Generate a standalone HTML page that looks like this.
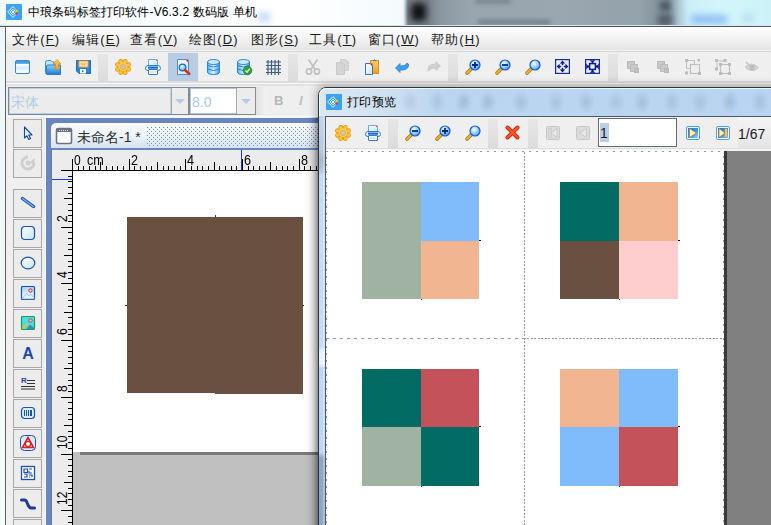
<!DOCTYPE html>
<html><head><meta charset="utf-8">
<style>
*{margin:0;padding:0;box-sizing:border-box}
html,body{width:771px;height:525px;overflow:hidden}
body{position:relative;font-family:"Liberation Sans",sans-serif;background:#eef6f8;color:#000}
.a{position:absolute}
.i{position:absolute;overflow:visible}
.t{position:absolute;white-space:nowrap}
</style></head><body>
<svg width="0" height="0" style="position:absolute"><defs>
<linearGradient id="gwin" x1="0" y1="0" x2="0" y2="1"><stop offset="0" stop-color="#3f97dd"/><stop offset=".22" stop-color="#4aa4e6"/><stop offset=".3" stop-color="#ffffff"/><stop offset=".55" stop-color="#d7ebfb"/><stop offset="1" stop-color="#ffffff"/></linearGradient>
<linearGradient id="gfold" x1="0" y1="0" x2="0" y2="1"><stop offset="0" stop-color="#8fd0f8"/><stop offset="1" stop-color="#1a7ad4"/></linearGradient>
<linearGradient id="gorg" x1="0" y1="0" x2="0" y2="1"><stop offset="0" stop-color="#ffd060"/><stop offset="1" stop-color="#f89a20"/></linearGradient>
<linearGradient id="gdb" x1="0" y1="0" x2="1" y2="0"><stop offset="0" stop-color="#5ab4ee"/><stop offset=".5" stop-color="#d8f0fe"/><stop offset="1" stop-color="#3a9ae4"/></linearGradient>
<radialGradient id="glens" cx=".4" cy=".35" r=".7"><stop offset="0" stop-color="#ffffff"/><stop offset=".5" stop-color="#9ad4fb"/><stop offset="1" stop-color="#3a9ae8"/></radialGradient>
<linearGradient id="gpaper" x1="0" y1="0" x2="1" y2="1"><stop offset="0" stop-color="#ffffff"/><stop offset="1" stop-color="#c8e2f8"/></linearGradient>
<linearGradient id="gplay" x1="0" y1="0" x2="1" y2="1"><stop offset="0" stop-color="#1478d8"/><stop offset=".6" stop-color="#3a9ae8"/><stop offset="1" stop-color="#a0e0ff"/></linearGradient>
<linearGradient id="gimg1" x1="0" y1="0" x2="0" y2="1"><stop offset="0" stop-color="#a0d4f8"/><stop offset="1" stop-color="#ffffff"/></linearGradient>
<linearGradient id="gicon" x1="0" y1="0" x2="1" y2="1"><stop offset="0" stop-color="#6cc0fa"/><stop offset="1" stop-color="#2a88ec"/></linearGradient>
</defs></svg>
<div class="a" style="left:0px;top:0px;width:771px;height:25px;background:linear-gradient(90deg,#f2f9fb 0,#fbfdfe 200px,#ffffff 300px,#f6fbfd 380px,#f4fafc 403px,#c0d0dc 405px,#7a8288 408px,#788088 428px,#8a96a0 440px,#98a4ae 470px,#9aa6b0 560px,#94a2ac 640px,#8a98a2 652px,#7e8c96 668px,#a8c4d0 678px,#cceef6 688px,#d2f6fa 720px,#ccf2f8 771px)"></div>
<div class="a" style="left:411px;top:3px;width:15px;height:18px;background:#0e1216;filter:blur(3.5px);border-radius:3px"></div>
<div class="a" style="left:660px;top:2px;width:10px;height:8px;background:#404c56;filter:blur(3px)"></div>
<div class="a" style="left:658px;top:15px;width:14px;height:10px;background:#505c66;filter:blur(3px)"></div>
<div class="a" style="left:691px;top:15px;width:36px;height:9px;background:#90bef4;filter:blur(3.5px)"></div>
<div class="a" style="left:743px;top:15px;width:10px;height:7px;background:#b0dcf4;filter:blur(3px)"></div>
<div class="a" style="left:475px;top:0px;width:36px;height:3px;background:#6a767e;filter:blur(2px)"></div>
<div class="a" style="left:478px;top:20px;width:72px;height:4px;background:#6e7a84;filter:blur(2px)"></div>
<div class="a" style="left:258px;top:12px;width:12px;height:10px;background:#c8dcf8;filter:blur(3px)"></div>
<div class="a" style="left:0px;top:25px;width:771px;height:1px;background:#d8e4ea"></div>
<div class="a" style="left:0px;top:26px;width:771px;height:1px;background:#4e565c"></div>
<svg class="i" style="left:6px;top:4px" width="16" height="16" viewBox="0 0 16 16"><rect x="0" y="0" width="16" height="16" rx="1" fill="#3aa2f8"/><g transform="rotate(45 7 8)" fill="none" stroke="#ffffff" stroke-width=".9" opacity=".9"><rect x="3.2" y="4.2" width="7.6" height="7.6"/><rect x="5" y="6" width="4" height="4"/><path d="M7 4.2 V11.8 M3.2 8 H10.8"/></g><path d="M9.5 4 L12.5 8 L9.5 12" fill="#3aa2f8"/><circle cx="10.8" cy="7" r="1.3" fill="#f4d020"/><circle cx="10.6" cy="9.6" r="1.2" fill="#e83040"/><circle cx="12.4" cy="8.4" r=".9" fill="#40b848"/></svg>
<div class="t" style="left:28px;top:3px;font-size:12px;line-height:18px;color:#000;letter-spacing:.15px">中琅条码标签打印软件-V6.3.2 数码版 单机</div>
<div class="a" style="left:0px;top:27px;width:5px;height:498px;background:linear-gradient(180deg,#eef7f9 0,#f2f8f8 50%,#f6fafa 100%)"></div>
<div class="a" style="left:5px;top:26px;width:1px;height:499px;background:#5e6266"></div>
<div class="a" style="left:6px;top:27px;width:765px;height:23px;background:linear-gradient(180deg,#fefefe 0,#f4f4f4 45%,#e4e4e4 100%)"></div>
<div class="a" style="left:6px;top:50px;width:765px;height:1px;background:#f2f2f2"></div>
<div class="a" style="left:6px;top:51px;width:765px;height:1px;background:#d6d6d6"></div>
<div class="t" style="left:12px;top:31px;font-size:13px;line-height:17px;color:#1a1a1a;letter-spacing:1.1px">文件(<u>F</u>)</div>
<div class="t" style="left:72px;top:31px;font-size:13px;line-height:17px;color:#1a1a1a;letter-spacing:1.1px">编辑(<u>E</u>)</div>
<div class="t" style="left:129.5px;top:31px;font-size:13px;line-height:17px;color:#1a1a1a;letter-spacing:1.1px">查看(<u>V</u>)</div>
<div class="t" style="left:189px;top:31px;font-size:13px;line-height:17px;color:#1a1a1a;letter-spacing:1.1px">绘图(<u>D</u>)</div>
<div class="t" style="left:250.5px;top:31px;font-size:13px;line-height:17px;color:#1a1a1a;letter-spacing:1.1px">图形(<u>S</u>)</div>
<div class="t" style="left:309px;top:31px;font-size:13px;line-height:17px;color:#1a1a1a;letter-spacing:1.1px">工具(<u>T</u>)</div>
<div class="t" style="left:367.5px;top:31px;font-size:13px;line-height:17px;color:#1a1a1a;letter-spacing:1.1px">窗口(<u>W</u>)</div>
<div class="t" style="left:431px;top:31px;font-size:13px;line-height:17px;color:#1a1a1a;letter-spacing:1.1px">帮助(<u>H</u>)</div>
<div class="a" style="left:6px;top:52px;width:765px;height:29px;background:#efefef"></div>
<div class="a" style="left:6px;top:81px;width:765px;height:2px;background:#dcdcdc"></div>
<div class="a" style="left:6px;top:83px;width:765px;height:1px;background:#fafafa"></div>
<div class="a" style="left:6px;top:84px;width:765px;height:2px;background:#e2e2e2"></div>
<div class="a" style="left:98px;top:54px;width:10px;height:27px;background:linear-gradient(180deg,#e6e6e6,#dcdcdc)"></div>
<div class="a" style="left:288px;top:54px;width:10px;height:27px;background:linear-gradient(180deg,#e6e6e6,#dcdcdc)"></div>
<div class="a" style="left:448px;top:54px;width:10px;height:27px;background:linear-gradient(180deg,#e6e6e6,#dcdcdc)"></div>
<div class="a" style="left:608px;top:54px;width:10px;height:27px;background:linear-gradient(180deg,#e6e6e6,#dcdcdc)"></div>
<div class="a" style="left:168px;top:53px;width:30px;height:28px;background:#b8cde4"></div>
<svg class="i" style="left:15px;top:60px" width="16" height="16" viewBox="0 0 16 16"><rect x="0.5" y="0.5" width="14" height="13" rx="1.5" fill="url(#gwin)" stroke="#3788cf"/></svg>
<svg class="i" style="left:45px;top:59px" width="16" height="16" viewBox="0 0 16 16"><path d="M0.5 3.5 Q0.5 1.5 2.5 1.5 H6 L7.5 3 H9 V15.5 H2.5 Q0.5 15.5 0.5 13.5Z" fill="#bfe4fb" stroke="#3a8ed8"/><path d="M1.5 7 Q2 6 3 6 H15.5 V15.5 H2.5 Q1.5 15.5 1.5 14Z" fill="url(#gfold)" stroke="#2a7cc8"/><path d="M12 0.5 L15.8 5 H13.6 V10.5 H10.4 V5 H8.2Z" fill="url(#gorg)" stroke="#d88a20" stroke-width=".8"/></svg>
<svg class="i" style="left:76px;top:60px" width="16" height="16" viewBox="0 0 16 16"><path d="M0.5 0.5 H14.5 V13.5 H3 L0.5 11Z" fill="#2a86dc" stroke="#1c6cc0"/><rect x="3" y="1" width="9" height="6" fill="#fff4c8" stroke="#e8a040"/><rect x="4.5" y="2.5" width="6" height="3" fill="#f8c070"/><rect x="4" y="9" width="6" height="4.5" fill="#fff"/><path d="M6 10 L8 11.2 L6 12.4Z" fill="#2060c0"/></svg>
<svg class="i" style="left:115px;top:59px" width="16" height="16" viewBox="0 0 16 16"><circle cx="13.54" cy="10.30" r="1.7" fill="none" stroke="#e08a10" stroke-width="1.3"/><circle cx="10.30" cy="13.54" r="1.7" fill="none" stroke="#e08a10" stroke-width="1.3"/><circle cx="5.70" cy="13.54" r="1.7" fill="none" stroke="#e08a10" stroke-width="1.3"/><circle cx="2.46" cy="10.30" r="1.7" fill="none" stroke="#e08a10" stroke-width="1.3"/><circle cx="2.46" cy="5.70" r="1.7" fill="none" stroke="#e08a10" stroke-width="1.3"/><circle cx="5.70" cy="2.46" r="1.7" fill="none" stroke="#e08a10" stroke-width="1.3"/><circle cx="10.30" cy="2.46" r="1.7" fill="none" stroke="#e08a10" stroke-width="1.3"/><circle cx="13.54" cy="5.70" r="1.7" fill="none" stroke="#e08a10" stroke-width="1.3"/><circle cx="8" cy="8" r="4.8" fill="none" stroke="#e08a10" stroke-width="1.3"/><circle cx="13.54" cy="10.30" r="1.7" fill="#ffc830"/><circle cx="10.30" cy="13.54" r="1.7" fill="#ffc830"/><circle cx="5.70" cy="13.54" r="1.7" fill="#ffc830"/><circle cx="2.46" cy="10.30" r="1.7" fill="#ffc830"/><circle cx="2.46" cy="5.70" r="1.7" fill="#ffc830"/><circle cx="5.70" cy="2.46" r="1.7" fill="#ffc830"/><circle cx="10.30" cy="2.46" r="1.7" fill="#ffc830"/><circle cx="13.54" cy="5.70" r="1.7" fill="#ffc830"/><circle cx="8" cy="8" r="4.8" fill="url(#gorg)"/><circle cx="8" cy="8" r="4.2" fill="#ffd040"/><circle cx="8" cy="8" r="2.6" fill="#c4c4cc" stroke="#e8a040" stroke-width=".7"/></svg>
<svg class="i" style="left:145px;top:59px" width="16" height="16" viewBox="0 0 16 16"><path d="M3.5 0.5 H10.5 L12.5 2.5 V7 H3.5Z" fill="url(#gpaper)" stroke="#6aaae0"/><path d="M10.5 0.5 L12.5 2.5 V0.5Z" fill="#e02020"/><path d="M3 6.5 H13 Q15.5 6.5 15.5 9.5 Q15.5 11.5 13 11.5 H3 Q0.5 11.5 0.5 9.5 Q0.5 6.5 3 6.5Z" fill="#f4faff" stroke="#2a7ed0"/><rect x="3" y="7.5" width="10" height="2.2" fill="#1a6cc8"/><rect x="3.5" y="10.5" width="9" height="5" rx=".5" fill="#ffffff" stroke="#2a7ed0"/><rect x="4.5" y="12.5" width="7" height="1" fill="#b8daf4"/></svg>
<svg class="i" style="left:176px;top:59px" width="16" height="16" viewBox="0 0 16 16"><path d="M1.5 0.5 H10 L12.5 3 V15.5 H1.5Z" fill="url(#gpaper)" stroke="#4a90d8"/><path d="M9.5 0.5 L12.5 3.5 V0.5Z" fill="#e02020"/><circle cx="6.5" cy="8.5" r="3.4" fill="url(#glens)" stroke="#1a6ac8" stroke-width="1.2"/><path d="M9.2 11.2 L13.2 14.8" stroke="#d83010" stroke-width="2.6" stroke-linecap="round"/></svg>
<svg class="i" style="left:206px;top:59px" width="16" height="16" viewBox="0 0 16 16"><path d="M1.5 3 V13 Q1.5 15.5 7.5 15.5 Q13.5 15.5 13.5 13 V3" fill="url(#gdb)" stroke="#2a86d8"/><ellipse cx="7.5" cy="3" rx="6" ry="2.5" fill="#c8ecfe" stroke="#2a86d8"/><path d="M1.5 6.5 Q7.5 9.5 13.5 6.5 M1.5 10 Q7.5 13 13.5 10" fill="none" stroke="#2a86d8"/></svg>
<svg class="i" style="left:236px;top:59px" width="16" height="16" viewBox="0 0 16 16"><path d="M1.5 3 V13 Q1.5 15.5 7.5 15.5 Q13.5 15.5 13.5 13 V3" fill="url(#gdb)" stroke="#2a86d8"/><ellipse cx="7.5" cy="3" rx="6" ry="2.5" fill="#c8ecfe" stroke="#2a86d8"/><path d="M1.5 6.5 Q7.5 9.5 13.5 6.5 M1.5 10 Q7.5 13 13.5 10" fill="none" stroke="#2a86d8"/><circle cx="11.5" cy="11.5" r="4.3" fill="#2aa040" stroke="#1a8030" stroke-width=".8"/><path d="M9.3 11.6 L11 13.2 L13.8 9.8" fill="none" stroke="#d8ffd8" stroke-width="1.4"/></svg>
<svg class="i" style="left:266px;top:60px" width="16" height="16" viewBox="0 0 16 16"><path d="M2 0 V15 M5.5 0 V15 M9 0 V15 M12.5 0 V15 M0 2 H15 M0 5.5 H15 M0 9 H15 M0 12.5 H15" stroke="#3c5c80" stroke-width="1.15"/></svg>
<svg class="i" style="left:305px;top:59px" width="16" height="16" viewBox="0 0 16 16"><path d="M3.5 0.5 L10.5 11 M12.5 0.5 L5.5 11" stroke="#c0c0c0" stroke-width="1.6"/><circle cx="4" cy="12.5" r="2.6" fill="none" stroke="#c0c0c0" stroke-width="1.6"/><circle cx="12" cy="12.5" r="2.6" fill="none" stroke="#c0c0c0" stroke-width="1.6"/></svg>
<svg class="i" style="left:335px;top:59px" width="16" height="16" viewBox="0 0 16 16"><path d="M5.5 0.5 H11 L13.5 3 V11.5 H5.5Z" fill="#d8d8d8" stroke="#cfcfcf"/><path d="M1.5 3.5 H7 L9.5 6 V15.5 H1.5Z" fill="#d4d4d4" stroke="#c8c8c8"/></svg>
<svg class="i" style="left:365px;top:59px" width="16" height="16" viewBox="0 0 16 16"><rect x="5.5" y="1.5" width="8" height="13" fill="url(#gorg)" stroke="#d89020"/><path d="M8 2 Q9.5 -0.5 11 2" fill="#5aa0e0" stroke="#2a78c8"/><path d="M0.5 4.5 H5 L7.5 7 V15.5 H0.5Z" fill="url(#gpaper)" stroke="#2a78c8"/><path d="M5 4.5 L7.5 7 V4.5Z" fill="#e02020"/></svg>
<svg class="i" style="left:395px;top:60px" width="16" height="16" viewBox="0 0 16 16"><path d="M0.5 8 L5 3.5 V6 Q11 6 12 3 Q14 3.5 13.5 6 Q12.5 10.5 5 10 V12.5Z" fill="#3aa0f0" stroke="#2a80d0" stroke-width=".8"/></svg>
<svg class="i" style="left:425px;top:60px" width="16" height="16" viewBox="0 0 16 16"><path d="M15.5 6 L11 1.5 V4 Q5 4 3.5 7 Q2 9.5 3.5 11 Q5.5 8 11 8 V10.5Z" fill="#d0d0d0" stroke="#c8c8c8" stroke-width=".8"/></svg>
<svg class="i" style="left:465px;top:59px" width="16" height="16" viewBox="0 0 16 16"><path d="M2 14 L6 10" stroke="#a07010" stroke-width="3.6" stroke-linecap="round"/><path d="M2 14 L6 10" stroke="#e8b030" stroke-width="2.4" stroke-linecap="round"/><circle cx="10" cy="6" r="5" fill="url(#glens)" stroke="#1a5ad0" stroke-width="1.2"/><path d="M10 3 V9 M7 6 H13" stroke="#002a90" stroke-width="1.8"/></svg>
<svg class="i" style="left:495px;top:59px" width="16" height="16" viewBox="0 0 16 16"><path d="M2 14 L6 10" stroke="#a07010" stroke-width="3.6" stroke-linecap="round"/><path d="M2 14 L6 10" stroke="#e8b030" stroke-width="2.4" stroke-linecap="round"/><circle cx="10" cy="6" r="5" fill="url(#glens)" stroke="#1a5ad0" stroke-width="1.2"/><path d="M7 6 H13" stroke="#002a90" stroke-width="1.8"/></svg>
<svg class="i" style="left:525px;top:59px" width="16" height="16" viewBox="0 0 16 16"><path d="M2 14 L6 10" stroke="#a07010" stroke-width="3.6" stroke-linecap="round"/><path d="M2 14 L6 10" stroke="#e8b030" stroke-width="2.4" stroke-linecap="round"/><circle cx="10" cy="6" r="5" fill="url(#glens)" stroke="#1a5ad0" stroke-width="1.2"/></svg>
<svg class="i" style="left:555px;top:59px" width="16" height="16" viewBox="0 0 16 16"><rect x="0.6" y="0.6" width="13.8" height="13.8" fill="#eeeef8" stroke="#1030a0" stroke-width="1.2"/><path d="M7.5 1 V14 M1 7.5 H14" stroke="#c8cce8" stroke-width="1"/><path d="M7.5 1.6 L4.8 4.6 H10.2Z M7.5 13.4 L4.8 10.4 H10.2Z M1.6 7.5 L4.6 4.8 V10.2Z M13.4 7.5 L10.4 4.8 V10.2Z" fill="#0a1a90"/><path d="M7.5 4 V6 M7.5 9 V11 M4 7.5 H6 M9 7.5 H11" stroke="#0a1a90" stroke-width="1.6"/></svg>
<svg class="i" style="left:585px;top:59px" width="16" height="16" viewBox="0 0 16 16"><rect x="0.6" y="0.6" width="13.8" height="13.8" fill="#eeeef8" stroke="#1030a0" stroke-width="1.2"/><rect x="4.6" y="4.6" width="5.8" height="5.8" fill="#eef0fa" stroke="#0a1a90" stroke-width="1.5"/><path d="M4.6 1.2 H10.4 L7.5 3.8Z M4.6 13.8 H10.4 L7.5 11.2Z M1.2 4.6 V10.4 L3.8 7.5Z M13.8 4.6 V10.4 L11.2 7.5Z" fill="#0a1a90"/><path d="M7.5 3 V4.5 M7.5 10.5 V12 M3 7.5 H4.5 M10.5 7.5 H12" stroke="#0a1a90" stroke-width="1.8"/></svg>
<svg class="i" style="left:627px;top:61px" width="16" height="16" viewBox="0 0 16 16"><rect x="0.5" y="0.5" width="7" height="7" fill="#c8c8c8" stroke="#bcbcbc"/><rect x="3.5" y="3.5" width="7" height="7" fill="#c8c8c8" stroke="#bcbcbc"/><rect x="7.5" y="7.5" width="4" height="4" fill="#c0c0c0" stroke="#b8b8b8"/></svg>
<svg class="i" style="left:657px;top:61px" width="16" height="16" viewBox="0 0 16 16"><rect x="0.5" y="0.5" width="7" height="7" fill="#c8c8c8" stroke="#bcbcbc"/><rect x="3.5" y="3.5" width="7" height="7" fill="#c8c8c8" stroke="#bcbcbc"/><rect x="7.5" y="7.5" width="4" height="4" fill="#c0c0c0" stroke="#b8b8b8"/></svg>
<svg class="i" style="left:685px;top:59px" width="16" height="16" viewBox="0 0 16 16"><path d="M1.5 1.5 H9.5 V5 M1.5 1.5 V9.5 H5" fill="none" stroke="#c0c0c0" stroke-width="1"/><rect x="5.5" y="5.5" width="9" height="9" fill="none" stroke="#c0c0c0" stroke-width="1.2"/><rect x="0" y="0" width="3" height="3" fill="#bcbcbc"/><rect x="12.5" y="0" width="2.5" height="2.5" fill="#bcbcbc"/><rect x="0" y="12.5" width="3" height="3" fill="#bcbcbc"/><rect x="13" y="13" width="3" height="3" fill="#bcbcbc"/></svg>
<svg class="i" style="left:715px;top:59px" width="16" height="16" viewBox="0 0 16 16"><path d="M2 2 H9.5 M2 2 V9.5" fill="none" stroke="#c0c0c0"/><rect x="5.5" y="5.5" width="9" height="9" fill="none" stroke="#c0c0c0" stroke-width="1.2"/><rect x="0" y="0" width="3" height="3" fill="#bcbcbc"/><rect x="8.5" y="0" width="3" height="3" fill="#bcbcbc"/><rect x="0" y="8.5" width="3" height="3" fill="#bcbcbc"/><rect x="4" y="4" width="3" height="3" fill="#bcbcbc"/><rect x="13" y="4" width="3" height="3" fill="#bcbcbc"/><rect x="4" y="13" width="3" height="3" fill="#bcbcbc"/><rect x="13" y="13" width="3" height="3" fill="#bcbcbc"/></svg>
<svg class="i" style="left:744px;top:60px" width="16" height="16" viewBox="0 0 16 16"><path d="M1 7 Q7 1 14.5 7.5 Q8 14 1 7Z" fill="#d4d4d4" stroke="#c8c8c8"/><circle cx="8" cy="7.5" r="2.6" fill="#bdbdbd"/><path d="M2 2 L6 6" stroke="#c4c4c4" stroke-width="1.6"/></svg>
<div class="a" style="left:6px;top:86px;width:765px;height:31px;background:#efefef"></div>
<div class="a" style="left:8px;top:87px;width:181px;height:28px;background:#ececec;border:1px solid #7a8a9a"></div>
<div class="a" style="left:9px;top:88px;width:162px;height:26px;border:1px solid #b8d0e8"></div>
<div class="a" style="left:171px;top:88px;width:1px;height:26px;background:#a8a8a8"></div>
<div class="t" style="left:11px;top:93px;font-size:14px;line-height:18px;color:#b4cce4;letter-spacing:-.5px">宋体</div>
<svg class="i" style="left:175px;top:99px" width="10" height="6"><path d="M0 0 H10 L5 5Z" fill="#b0cce8"/></svg>
<div class="a" style="left:189px;top:87px;width:67px;height:28px;background:#ececec;border:1px solid #8a8a8a"></div>
<div class="a" style="left:190px;top:88px;width:47px;height:26px;background:#fff;border:1px solid #b0c8e4"></div>
<div class="a" style="left:236px;top:88px;width:1px;height:26px;background:#a8a8a8"></div>
<div class="t" style="left:192px;top:94px;font-size:14px;line-height:16px;color:#a8c8ec">8.0</div>
<svg class="i" style="left:241px;top:99px" width="10" height="6"><path d="M0 0 H10 L5 5Z" fill="#b0cce8"/></svg>
<div class="a" style="left:256px;top:87px;width:10px;height:28px;background:linear-gradient(90deg,#e0e0e0,#f2f2f2)"></div>
<div class="t" style="left:274px;top:93px;font-size:13px;font-weight:bold;line-height:16px;color:#b8b8b8">B</div>
<div class="t" style="left:299px;top:93px;font-size:13px;font-weight:bold;font-style:italic;line-height:16px;color:#c0c0c0">I</div>
<div class="a" style="left:6px;top:116px;width:765px;height:1px;background:#fafafa"></div>
<div class="a" style="left:6px;top:117px;width:40px;height:408px;background:#efefef"></div>
<div class="a" style="left:45px;top:117px;width:1px;height:408px;background:#fbfbfb"></div>
<div class="a" style="left:13px;top:119px;width:29px;height:29px;background:#ececec;border:1px solid #a8a8a8"></div>
<svg class="i" style="left:20px;top:125px" width="16" height="16" viewBox="0 0 16 16"><path d="M4.5 2 L4.5 13 L6.8 10.8 L8.8 14.5 L10.6 13.6 L8.7 10 L12 10Z" fill="#e0f8ff" stroke="#1a40b0" stroke-width="1.1" stroke-linejoin="round"/></svg>
<div class="a" style="left:13px;top:149px;width:29px;height:29px;background:#ececec;border:1px solid #a8a8a8"></div>
<svg class="i" style="left:20px;top:155px" width="16" height="16" viewBox="0 0 16 16"><path d="M8 2 A6 6 0 1 0 14 8" fill="none" stroke="#cfcfcf" stroke-width="3"/><circle cx="8" cy="8" r="2.5" fill="#d0d0d0"/><path d="M14.5 3 L14.5 9 L9 8Z" fill="#cccccc"/></svg>
<div class="a" style="left:13px;top:189px;width:29px;height:29px;background:#ececec;border:1px solid #a8a8a8"></div>
<svg class="i" style="left:20px;top:195px" width="16" height="16" viewBox="0 0 16 16"><path d="M2.5 3.5 L13.5 11.5" stroke="#1a50b0" stroke-width="3.4" stroke-linecap="round"/><path d="M2.5 3.5 L13.5 11.5" stroke="#7ab4ec" stroke-width="1.4" stroke-linecap="round"/></svg>
<div class="a" style="left:13px;top:219px;width:29px;height:29px;background:#ececec;border:1px solid #a8a8a8"></div>
<svg class="i" style="left:20px;top:225px" width="16" height="16" viewBox="0 0 16 16"><rect x="1.5" y="1.5" width="13" height="13" rx="3.5" fill="url(#gpaper)" stroke="#1a50b0" stroke-width="1.2"/></svg>
<div class="a" style="left:13px;top:249px;width:29px;height:29px;background:#ececec;border:1px solid #a8a8a8"></div>
<svg class="i" style="left:20px;top:255px" width="16" height="16" viewBox="0 0 16 16"><ellipse cx="8" cy="8" rx="6.8" ry="5.8" fill="url(#gpaper)" stroke="#1a50b0" stroke-width="1.2"/></svg>
<div class="a" style="left:13px;top:279px;width:29px;height:29px;background:#ececec;border:1px solid #a8a8a8"></div>
<svg class="i" style="left:20px;top:285px" width="16" height="16" viewBox="0 0 16 16"><rect x="1.5" y="1.5" width="13" height="13" rx="1" fill="url(#gimg1)" stroke="#1a50b0" stroke-width="1.2"/><path d="M2.2 13.8 L6.5 8.5 L9 11 L11 9.5 L13.8 12.5 V13.8Z" fill="#e4f2fc" stroke="#90b8e0" stroke-width=".8"/><circle cx="10.5" cy="5.5" r="1.7" fill="#ffc8c8" stroke="#e03030" stroke-width="1"/></svg>
<div class="a" style="left:13px;top:309px;width:29px;height:29px;background:#ececec;border:1px solid #a8a8a8"></div>
<svg class="i" style="left:20px;top:315px" width="16" height="16" viewBox="0 0 16 16"><rect x="1.5" y="1.5" width="13" height="13" rx="1" fill="#48dcf0" stroke="#20a040" stroke-width="1.2"/><path d="M6.5 14 L10 9.5 L14 13 V14Z" fill="#3a88c8"/><path d="M2.2 12.5 L6.5 8 L8 9.5 L3.8 14Z" fill="#f0c020"/><circle cx="10.5" cy="5.5" r="1.7" fill="#ffc8c8" stroke="#e03030" stroke-width="1"/></svg>
<div class="a" style="left:13px;top:339px;width:29px;height:29px;background:#ececec;border:1px solid #a8a8a8"></div>
<svg class="i" style="left:20px;top:345px" width="16" height="16" viewBox="0 0 16 16"><text x="8" y="14" text-anchor="middle" font-family="Liberation Sans" font-weight="bold" font-size="16" fill="#1a4aa8">A</text></svg>
<div class="a" style="left:13px;top:369px;width:29px;height:29px;background:#ececec;border:1px solid #a8a8a8"></div>
<svg class="i" style="left:20px;top:375px" width="16" height="16" viewBox="0 0 16 16"><text x="1" y="8" font-family="Liberation Sans" font-weight="bold" font-size="8" fill="#1a4aa8">R</text><path d="M7 5.5 H15 M7 8.5 H15 M1 11.5 H15 M1 14 H15" stroke="#303030" stroke-width="1"/></svg>
<div class="a" style="left:13px;top:399px;width:29px;height:29px;background:#ececec;border:1px solid #a8a8a8"></div>
<svg class="i" style="left:20px;top:405px" width="16" height="16" viewBox="0 0 16 16"><rect x="1.5" y="2.5" width="13" height="11" rx="3" fill="#d8ecfc" stroke="#1a50b0" stroke-width="1.2"/><rect x="4" y="5" width="1" height="6" fill="#1a50b0"/><rect x="6" y="5" width="1" height="6" fill="#1a50b0"/><rect x="8" y="5" width="1" height="6" fill="#1a50b0"/><rect x="10" y="5" width="1" height="6" fill="#1a50b0"/><rect x="11" y="5" width="1" height="6" fill="#1a50b0"/></svg>
<div class="a" style="left:13px;top:429px;width:29px;height:29px;background:#ececec;border:1px solid #a8a8a8"></div>
<svg class="i" style="left:20px;top:435px" width="16" height="16" viewBox="0 0 16 16"><rect x="0.5" y="0.5" width="15" height="15" rx="4" fill="#d8ecfc" stroke="#1a50b0"/><path d="M8 2.5 L13.5 12.5 H2.5Z" fill="none" stroke="#e02020" stroke-width="1.6"/><circle cx="8" cy="9" r="2.6" fill="#fff" stroke="#e02020" stroke-width="1.3"/></svg>
<div class="a" style="left:13px;top:459px;width:29px;height:29px;background:#ececec;border:1px solid #a8a8a8"></div>
<svg class="i" style="left:20px;top:465px" width="16" height="16" viewBox="0 0 16 16"><rect x="1.5" y="1.5" width="13" height="13" fill="#fff" stroke="#1a50b0" stroke-width="1.3"/><path d="M4 4 H7.5 V7.5 H4Z M4 9 H7 V12 H4" fill="none" stroke="#1a50b0" stroke-width="1.2"/><path d="M9 4 H12 M9 6 V8 H12 M9 10 H12 V12 M10 12 H9" fill="none" stroke="#1a50b0" stroke-width="1.2"/></svg>
<div class="a" style="left:13px;top:489px;width:29px;height:29px;background:#ececec;border:1px solid #a8a8a8"></div>
<svg class="i" style="left:20px;top:495px" width="16" height="16" viewBox="0 0 16 16"><path d="M1.5 5 H4.5 Q6 5 7 7.5 L8.5 11 Q9.5 13 11.5 13 H14.5" fill="none" stroke="#1a3aa0" stroke-width="3" stroke-linecap="round"/></svg>
<div class="a" style="left:13px;top:519px;width:29px;height:29px;background:#ececec;border:1px solid #a8a8a8"></div>
<div class="a" style="left:46px;top:118px;width:272px;height:407px;background:#6a86c0"></div>
<div class="a" style="left:51px;top:123px;width:267px;height:25px;background:linear-gradient(180deg,#fafcfe 0,#eef4fa 50%,#d6e2f0 100%);border-radius:5px 0 0 0"></div>
<svg class="i" style="left:56px;top:128px" width="16" height="16"><rect x="0.5" y="0.5" width="15" height="15" rx="1.5" fill="#fff" stroke="#6a7480" stroke-width="1.6"/><rect x="1" y="1" width="14" height="3" fill="#6a7480"/><path d="M3 2.5 H4 M5 2.5 H6 M7 2.5 H8 M9 2.5 H10 M11 2.5 H12" stroke="#fff" stroke-width=".8"/></svg>
<div class="t" style="left:77px;top:128px;font-size:14px;line-height:18px;color:#2e2e2e">未命名-1 *</div>
<svg class="i" style="left:147px;top:127px" width="171" height="19"><defs><pattern id="dots" width="4" height="4" patternUnits="userSpaceOnUse"><rect x="0" y="0" width="1" height="1" fill="#6e8cc8"/><rect x="2" y="2" width="1" height="1" fill="#6e8cc8"/></pattern></defs><rect width="171" height="19" fill="url(#dots)"/></svg>
<div class="a" style="left:51px;top:148px;width:267px;height:2px;background:#6a86c0"></div>
<div class="a" style="left:52px;top:150px;width:266px;height:375px;background:#ececec"></div>
<div class="a" style="left:51px;top:150px;width:1px;height:375px;background:#6a7a92"></div>
<div class="a" style="left:73px;top:171px;width:245px;height:281px;background:#fff"></div>
<div class="a" style="left:73px;top:452px;width:245px;height:73px;background:#c0c0c0"></div>
<div class="a" style="left:80px;top:452px;width:238px;height:3px;background:#7a7a7a"></div>
<div class="a" style="left:127px;top:217px;width:176px;height:177px;background:#6a5040"></div>
<div class="a" style="left:127px;top:393px;width:88px;height:1px;background:#fff"></div>
<div class="a" style="left:215px;top:215px;width:1px;height:2px;background:#333"></div>
<div class="a" style="left:125px;top:305px;width:2px;height:1px;background:#333"></div>
<div class="a" style="left:303px;top:305px;width:1px;height:1px;background:#333"></div>
<svg class="i" style="left:0;top:0" width="771" height="525"><path d="M61 170.5 H318" stroke="#000" stroke-width="1"/><path d="M72.5 159 V525" stroke="#000" stroke-width="1"/><path d="M72.5 159 V170" stroke="#000"/><path d="M78.5 166 V170" stroke="#000"/><path d="M83.5 166 V170" stroke="#000"/><path d="M89.5 166 V170" stroke="#000"/><path d="M95.5 166 V170" stroke="#000"/><path d="M100.5 162 V170" stroke="#000"/><path d="M106.5 166 V170" stroke="#000"/><path d="M112.5 166 V170" stroke="#000"/><path d="M117.5 166 V170" stroke="#000"/><path d="M123.5 166 V170" stroke="#000"/><path d="M129.5 159 V170" stroke="#000"/><path d="M134.5 166 V170" stroke="#000"/><path d="M140.5 166 V170" stroke="#000"/><path d="M146.5 166 V170" stroke="#000"/><path d="M151.5 166 V170" stroke="#000"/><path d="M157.5 162 V170" stroke="#000"/><path d="M163.5 166 V170" stroke="#000"/><path d="M168.5 166 V170" stroke="#000"/><path d="M174.5 166 V170" stroke="#000"/><path d="M180.5 166 V170" stroke="#000"/><path d="M185.5 159 V170" stroke="#000"/><path d="M191.5 166 V170" stroke="#000"/><path d="M197.5 166 V170" stroke="#000"/><path d="M202.5 166 V170" stroke="#000"/><path d="M208.5 166 V170" stroke="#000"/><path d="M214.5 162 V170" stroke="#000"/><path d="M219.5 166 V170" stroke="#000"/><path d="M225.5 166 V170" stroke="#000"/><path d="M231.5 166 V170" stroke="#000"/><path d="M236.5 166 V170" stroke="#000"/><path d="M242.5 159 V170" stroke="#000"/><path d="M248.5 166 V170" stroke="#000"/><path d="M253.5 166 V170" stroke="#000"/><path d="M259.5 166 V170" stroke="#000"/><path d="M265.5 166 V170" stroke="#000"/><path d="M270.5 162 V170" stroke="#000"/><path d="M276.5 166 V170" stroke="#000"/><path d="M282.5 166 V170" stroke="#000"/><path d="M287.5 166 V170" stroke="#000"/><path d="M293.5 166 V170" stroke="#000"/><path d="M299.5 159 V170" stroke="#000"/><path d="M304.5 166 V170" stroke="#000"/><path d="M310.5 166 V170" stroke="#000"/><path d="M316.5 166 V170" stroke="#000"/><path d="M61 170.5 H72" stroke="#000"/><path d="M68 176.5 H72" stroke="#000"/><path d="M68 181.5 H72" stroke="#000"/><path d="M68 187.5 H72" stroke="#000"/><path d="M68 193.5 H72" stroke="#000"/><path d="M64 198.5 H72" stroke="#000"/><path d="M68 204.5 H72" stroke="#000"/><path d="M68 210.5 H72" stroke="#000"/><path d="M68 215.5 H72" stroke="#000"/><path d="M68 221.5 H72" stroke="#000"/><path d="M61 227.5 H72" stroke="#000"/><path d="M68 232.5 H72" stroke="#000"/><path d="M68 238.5 H72" stroke="#000"/><path d="M68 244.5 H72" stroke="#000"/><path d="M68 249.5 H72" stroke="#000"/><path d="M64 255.5 H72" stroke="#000"/><path d="M68 261.5 H72" stroke="#000"/><path d="M68 266.5 H72" stroke="#000"/><path d="M68 272.5 H72" stroke="#000"/><path d="M68 278.5 H72" stroke="#000"/><path d="M61 283.5 H72" stroke="#000"/><path d="M68 289.5 H72" stroke="#000"/><path d="M68 295.5 H72" stroke="#000"/><path d="M68 300.5 H72" stroke="#000"/><path d="M68 306.5 H72" stroke="#000"/><path d="M64 312.5 H72" stroke="#000"/><path d="M68 317.5 H72" stroke="#000"/><path d="M68 323.5 H72" stroke="#000"/><path d="M68 329.5 H72" stroke="#000"/><path d="M68 334.5 H72" stroke="#000"/><path d="M61 340.5 H72" stroke="#000"/><path d="M68 346.5 H72" stroke="#000"/><path d="M68 351.5 H72" stroke="#000"/><path d="M68 357.5 H72" stroke="#000"/><path d="M68 363.5 H72" stroke="#000"/><path d="M64 368.5 H72" stroke="#000"/><path d="M68 374.5 H72" stroke="#000"/><path d="M68 380.5 H72" stroke="#000"/><path d="M68 385.5 H72" stroke="#000"/><path d="M68 391.5 H72" stroke="#000"/><path d="M61 397.5 H72" stroke="#000"/><path d="M68 402.5 H72" stroke="#000"/><path d="M68 408.5 H72" stroke="#000"/><path d="M68 414.5 H72" stroke="#000"/><path d="M68 419.5 H72" stroke="#000"/><path d="M64 425.5 H72" stroke="#000"/><path d="M68 431.5 H72" stroke="#000"/><path d="M68 436.5 H72" stroke="#000"/><path d="M68 442.5 H72" stroke="#000"/><path d="M68 448.5 H72" stroke="#000"/><path d="M61 454.5 H72" stroke="#000"/><path d="M68 459.5 H72" stroke="#000"/><path d="M68 465.5 H72" stroke="#000"/><path d="M68 471.5 H72" stroke="#000"/><path d="M68 476.5 H72" stroke="#000"/><path d="M64 482.5 H72" stroke="#000"/><path d="M68 488.5 H72" stroke="#000"/><path d="M68 493.5 H72" stroke="#000"/><path d="M68 499.5 H72" stroke="#000"/><path d="M68 505.5 H72" stroke="#000"/><path d="M61 510.5 H72" stroke="#000"/><path d="M68 516.5 H72" stroke="#000"/><path d="M68 522.5 H72" stroke="#000"/></svg>
<div class="t" style="left:74px;top:153px;font-size:14px;line-height:14px;color:#000;transform-origin:0 0;transform:scaleX(.86)">0</div>
<div class="t" style="left:86.5px;top:153px;font-size:14px;line-height:14px;color:#000;transform-origin:0 100%;transform:scale(.9,1.1)">cm</div>
<div class="t" style="left:131px;top:153px;font-size:14px;line-height:14px;color:#000;transform-origin:0 0;transform:scaleX(.9)">2</div>
<div class="t" style="left:187px;top:153px;font-size:14px;line-height:14px;color:#000;transform-origin:0 0;transform:scaleX(.9)">4</div>
<div class="t" style="left:244px;top:153px;font-size:14px;line-height:14px;color:#000;transform-origin:0 0;transform:scaleX(.9)">6</div>
<div class="t" style="left:301px;top:153px;font-size:14px;line-height:14px;color:#000;transform-origin:0 0;transform:scaleX(.9)">8</div>
<div class="t" style="left:54.5px;top:222px;font-size:14px;line-height:14px;color:#000;transform-origin:0 0;transform:rotate(-90deg) scaleX(.86)">2</div>
<div class="t" style="left:54.5px;top:278px;font-size:14px;line-height:14px;color:#000;transform-origin:0 0;transform:rotate(-90deg) scaleX(.86)">4</div>
<div class="t" style="left:54.5px;top:335px;font-size:14px;line-height:14px;color:#000;transform-origin:0 0;transform:rotate(-90deg) scaleX(.86)">6</div>
<div class="t" style="left:54.5px;top:392px;font-size:14px;line-height:14px;color:#000;transform-origin:0 0;transform:rotate(-90deg) scaleX(.86)">8</div>
<div class="t" style="left:54.5px;top:449px;font-size:14px;line-height:14px;color:#000;transform-origin:0 0;transform:rotate(-90deg) scaleX(.86)">10</div>
<div class="t" style="left:54.5px;top:505px;font-size:14px;line-height:14px;color:#000;transform-origin:0 0;transform:rotate(-90deg) scaleX(.86)">12</div>
<div class="a" style="left:52px;top:179px;width:20px;height:1px;background:#1a3adc"></div>
<div class="a" style="left:241px;top:150px;width:1px;height:20px;background:#1a3adc"></div>
<div class="a" style="left:304px;top:117px;width:14px;height:408px;background:linear-gradient(90deg,rgba(0,0,0,0),rgba(0,0,0,.02) 25%,rgba(0,0,0,.06) 50%,rgba(0,0,0,.14) 75%,rgba(0,0,0,.3))"></div>
<div class="a" style="left:318px;top:87px;width:460px;height:450px;border:1px solid #2e3438;border-radius:8px 0 0 0;box-shadow:-1px -1px 9px 1px rgba(0,0,0,.28);background:linear-gradient(180deg,#dfe9f2 0,#c8dcee 29px,#b6cce2 200px,#98b2cc 100%)"></div>
<div class="a" style="left:319px;top:88px;width:452px;height:28px;border-top-left-radius:7px;box-shadow:inset 1px 1px 0 rgba(255,255,255,.75);background:radial-gradient(ellipse 9px 12px at 91px 14px,rgba(100,130,160,0.18),rgba(100,130,160,0)),radial-gradient(ellipse 9px 12px at 118px 14px,rgba(100,130,160,0.22),rgba(100,130,160,0)),radial-gradient(ellipse 9px 12px at 145px 14px,rgba(100,130,160,0.3),rgba(100,130,160,0)),radial-gradient(ellipse 9px 12px at 169px 14px,rgba(100,130,160,0.3),rgba(100,130,160,0)),radial-gradient(ellipse 9px 12px at 202px 14px,rgba(100,130,160,0.26),rgba(100,130,160,0)),radial-gradient(ellipse 9px 12px at 237px 14px,rgba(100,130,160,0.22),rgba(100,130,160,0)),radial-gradient(ellipse 9px 12px at 267px 14px,rgba(100,130,160,0.24),rgba(100,130,160,0)),radial-gradient(ellipse 9px 12px at 297px 14px,rgba(100,130,160,0.2),rgba(100,130,160,0)),radial-gradient(ellipse 9px 12px at 323px 14px,rgba(100,130,160,0.26),rgba(100,130,160,0)),radial-gradient(ellipse 9px 12px at 353px 14px,rgba(100,130,160,0.22),rgba(100,130,160,0)),radial-gradient(ellipse 9px 12px at 381px 14px,rgba(100,130,160,0.22),rgba(100,130,160,0)),radial-gradient(ellipse 9px 12px at 411px 14px,rgba(100,130,160,0.28),rgba(100,130,160,0)),radial-gradient(ellipse 9px 12px at 441px 14px,rgba(100,130,160,0.24),rgba(100,130,160,0)),linear-gradient(90deg,#dce8f2 0,#d0e2f2 60px,#bcd6f0 120px,#b8d4f0 100%)"></div>
<div class="a" style="left:319px;top:116px;width:6px;height:409px;background:linear-gradient(90deg,rgba(255,255,255,0) 0,rgba(255,255,255,0) 60%,rgba(255,255,255,.45) 85%,rgba(255,255,255,.1) 100%),linear-gradient(180deg,#c0d4e8 0,#b8cadc 34px,#a8b8c8 44px,#b0c8e0 54px,#c4dcf4 60px,#c4dcf4 230px,#e8f2fc 236px,#e8f2fc 248px,#bcd8f6 252px,#bcd8f6 336px,#8ea8c4 342px,#8ea8c4 100%)"></div>
<svg class="i" style="left:326px;top:94px" width="16" height="16" viewBox="0 0 16 16"><rect x="0" y="0" width="16" height="16" rx="1" fill="#3aa2f8"/><g transform="rotate(45 7 8)" fill="none" stroke="#ffffff" stroke-width=".9" opacity=".9"><rect x="3.2" y="4.2" width="7.6" height="7.6"/><rect x="5" y="6" width="4" height="4"/><path d="M7 4.2 V11.8 M3.2 8 H10.8"/></g><path d="M9.5 4 L12.5 8 L9.5 12" fill="#3aa2f8"/><circle cx="10.8" cy="7" r="1.3" fill="#f4d020"/><circle cx="10.6" cy="9.6" r="1.2" fill="#e83040"/><circle cx="12.4" cy="8.4" r=".9" fill="#40b848"/></svg>
<div class="t" style="left:347px;top:93px;font-size:12px;line-height:18px;color:#000;letter-spacing:.3px">打印预览</div>
<div class="a" style="left:325px;top:116px;width:446px;height:409px;background:#efefef;border-left:1px solid #4e5862;border-top:1px solid #4e5862"></div>
<div class="a" style="left:326px;top:117px;width:445px;height:31px;background:#efefef"></div>
<div class="a" style="left:326px;top:148px;width:445px;height:1px;background:#dcdcdc"></div>
<div class="a" style="left:326px;top:149px;width:445px;height:1px;background:#f8f8f8"></div>
<div class="a" style="left:388px;top:119px;width:10px;height:29px;background:linear-gradient(180deg,#e6e6e6,#dcdcdc)"></div>
<div class="a" style="left:488px;top:119px;width:10px;height:29px;background:linear-gradient(180deg,#e6e6e6,#dcdcdc)"></div>
<div class="a" style="left:528px;top:119px;width:10px;height:29px;background:linear-gradient(180deg,#e6e6e6,#dcdcdc)"></div>
<div class="a" style="left:738px;top:117px;width:33px;height:31px;background:linear-gradient(180deg,#f4f4f4,#e4e4e4)"></div>
<svg class="i" style="left:335px;top:125px" width="16" height="16" viewBox="0 0 16 16"><circle cx="13.54" cy="10.30" r="1.7" fill="none" stroke="#e08a10" stroke-width="1.3"/><circle cx="10.30" cy="13.54" r="1.7" fill="none" stroke="#e08a10" stroke-width="1.3"/><circle cx="5.70" cy="13.54" r="1.7" fill="none" stroke="#e08a10" stroke-width="1.3"/><circle cx="2.46" cy="10.30" r="1.7" fill="none" stroke="#e08a10" stroke-width="1.3"/><circle cx="2.46" cy="5.70" r="1.7" fill="none" stroke="#e08a10" stroke-width="1.3"/><circle cx="5.70" cy="2.46" r="1.7" fill="none" stroke="#e08a10" stroke-width="1.3"/><circle cx="10.30" cy="2.46" r="1.7" fill="none" stroke="#e08a10" stroke-width="1.3"/><circle cx="13.54" cy="5.70" r="1.7" fill="none" stroke="#e08a10" stroke-width="1.3"/><circle cx="8" cy="8" r="4.8" fill="none" stroke="#e08a10" stroke-width="1.3"/><circle cx="13.54" cy="10.30" r="1.7" fill="#ffc830"/><circle cx="10.30" cy="13.54" r="1.7" fill="#ffc830"/><circle cx="5.70" cy="13.54" r="1.7" fill="#ffc830"/><circle cx="2.46" cy="10.30" r="1.7" fill="#ffc830"/><circle cx="2.46" cy="5.70" r="1.7" fill="#ffc830"/><circle cx="5.70" cy="2.46" r="1.7" fill="#ffc830"/><circle cx="10.30" cy="2.46" r="1.7" fill="#ffc830"/><circle cx="13.54" cy="5.70" r="1.7" fill="#ffc830"/><circle cx="8" cy="8" r="4.8" fill="url(#gorg)"/><circle cx="8" cy="8" r="4.2" fill="#ffd040"/><circle cx="8" cy="8" r="2.6" fill="#c4c4cc" stroke="#e8a040" stroke-width=".7"/></svg>
<svg class="i" style="left:365px;top:125px" width="16" height="16" viewBox="0 0 16 16"><path d="M3.5 0.5 H10.5 L12.5 2.5 V7 H3.5Z" fill="url(#gpaper)" stroke="#6aaae0"/><path d="M10.5 0.5 L12.5 2.5 V0.5Z" fill="#e02020"/><path d="M3 6.5 H13 Q15.5 6.5 15.5 9.5 Q15.5 11.5 13 11.5 H3 Q0.5 11.5 0.5 9.5 Q0.5 6.5 3 6.5Z" fill="#f4faff" stroke="#2a7ed0"/><rect x="3" y="7.5" width="10" height="2.2" fill="#1a6cc8"/><rect x="3.5" y="10.5" width="9" height="5" rx=".5" fill="#ffffff" stroke="#2a7ed0"/><rect x="4.5" y="12.5" width="7" height="1" fill="#b8daf4"/></svg>
<svg class="i" style="left:405px;top:125px" width="16" height="16" viewBox="0 0 16 16"><path d="M2 14 L6 10" stroke="#a07010" stroke-width="3.6" stroke-linecap="round"/><path d="M2 14 L6 10" stroke="#e8b030" stroke-width="2.4" stroke-linecap="round"/><circle cx="10" cy="6" r="5" fill="url(#glens)" stroke="#1a5ad0" stroke-width="1.2"/><path d="M7 6 H13" stroke="#002a90" stroke-width="1.8"/></svg>
<svg class="i" style="left:435px;top:125px" width="16" height="16" viewBox="0 0 16 16"><path d="M2 14 L6 10" stroke="#a07010" stroke-width="3.6" stroke-linecap="round"/><path d="M2 14 L6 10" stroke="#e8b030" stroke-width="2.4" stroke-linecap="round"/><circle cx="10" cy="6" r="5" fill="url(#glens)" stroke="#1a5ad0" stroke-width="1.2"/><path d="M10 3 V9 M7 6 H13" stroke="#002a90" stroke-width="1.8"/></svg>
<svg class="i" style="left:465px;top:125px" width="16" height="16" viewBox="0 0 16 16"><path d="M2 14 L6 10" stroke="#a07010" stroke-width="3.6" stroke-linecap="round"/><path d="M2 14 L6 10" stroke="#e8b030" stroke-width="2.4" stroke-linecap="round"/><circle cx="10" cy="6" r="5" fill="url(#glens)" stroke="#1a5ad0" stroke-width="1.2"/></svg>
<svg class="i" style="left:505px;top:125px" width="16" height="16" viewBox="0 0 16 16"><path d="M2.5 2.5 L12.5 12.5 M12.5 2.5 L2.5 12.5" stroke="#c82800" stroke-width="4" stroke-linecap="round"/><path d="M2.5 2.5 L12.5 12.5 M12.5 2.5 L2.5 12.5" stroke="#ff5030" stroke-width="2.4" stroke-linecap="round"/></svg>
<svg class="i" style="left:546px;top:126px" width="14" height="14" viewBox="0 0 14 14"><rect x="0.5" y="0.5" width="13" height="13" rx="1" fill="#dcdcdc" stroke="#c8c8c8"/><path d="M11 2.5 V11.5 L5 7Z" fill="#e8e8e8" stroke="#c4c4c4" stroke-width=".8"/><rect x="3" y="2.5" width="2" height="9" fill="#e8e8e8" stroke="#c4c4c4" stroke-width=".8"/></svg>
<svg class="i" style="left:576px;top:126px" width="14" height="14" viewBox="0 0 14 14"><rect x="0.5" y="0.5" width="13" height="13" rx="1" fill="#dcdcdc" stroke="#c8c8c8"/><path d="M10.5 2.5 V11.5 L3.5 7Z" fill="#e8e8e8" stroke="#c4c4c4" stroke-width=".8"/></svg>
<svg class="i" style="left:686px;top:126px" width="14" height="14" viewBox="0 0 14 14"><rect x="0.5" y="0.5" width="13" height="13" rx="1.5" fill="#e8f6ff" stroke="#4aa4ec"/><rect x="2" y="2" width="10" height="10" fill="url(#gplay)"/><path d="M3.5 2.5 V11.5 L10.5 7Z" fill="#fff2b8" stroke="#d08020" stroke-width=".8"/></svg>
<svg class="i" style="left:716px;top:126px" width="14" height="14" viewBox="0 0 14 14"><rect x="0.5" y="0.5" width="13" height="13" rx="1.5" fill="#e8f6ff" stroke="#4aa4ec"/><rect x="2" y="2" width="10" height="10" fill="url(#gplay)"/><path d="M3 2.5 V11.5 L9 7Z" fill="#fff2b8" stroke="#d08020" stroke-width=".8"/><rect x="9" y="2.5" width="2" height="9" fill="#fff2b8" stroke="#d08020" stroke-width=".8"/></svg>
<div class="a" style="left:598px;top:118px;width:79px;height:29px;background:#fff;border:1px solid #5e6c7a"></div>
<div class="a" style="left:600px;top:123px;width:9px;height:19px;background:#b8cfe6"></div>
<div class="t" style="left:600px;top:125px;font-size:14px;line-height:17px;color:#1a1a1a">1</div>
<div class="t" style="left:738px;top:126px;font-size:14px;line-height:17px;color:#1a1a1a">1/67</div>
<div class="a" style="left:326px;top:150px;width:398px;height:375px;background:#fff"></div>
<div class="a" style="left:724px;top:151px;width:3px;height:374px;background:#3a3a3a"></div>
<div class="a" style="left:727px;top:151px;width:44px;height:374px;background:#808080"></div>
<div class="a" style="left:326px;top:151px;width:398px;height:1px;background-image:linear-gradient(90deg,#9a9a9a 2px,transparent 2px);background-size:7px 1px"></div>
<div class="a" style="left:326px;top:338px;width:198px;height:1px;background-image:linear-gradient(90deg,#9a9a9a 3px,transparent 3px);background-size:7px 1px"></div>
<div class="a" style="left:524px;top:338px;width:200px;height:1px;background-image:linear-gradient(90deg,#9a9a9a 0 2px,transparent 2px 4px,#9a9a9a 4px 6px,transparent 6px 7px);background-size:7px 1px;background-position:3px 0"></div>
<div class="a" style="left:326px;top:157px;width:1px;height:368px;background-image:linear-gradient(180deg,#9a9a9a 2px,transparent 2px);background-size:1px 7px"></div>
<div class="a" style="left:524px;top:151px;width:1px;height:374px;background-image:linear-gradient(180deg,#9a9a9a 0 2px,transparent 2px 4px,#9a9a9a 4px 6px,transparent 6px 7px);background-size:1px 7px;background-position:0 1px"></div>
<div class="a" style="left:723px;top:156px;width:1px;height:369px;background-image:linear-gradient(180deg,#9a9a9a 2px,transparent 2px);background-size:1px 7px"></div>
<div class="a" style="left:362px;top:182px;width:59px;height:59px;background:#a0b2a2"></div>
<div class="a" style="left:421px;top:182px;width:58px;height:59px;background:#80bcfc"></div>
<div class="a" style="left:362px;top:241px;width:59px;height:58px;background:#a0b2a2"></div>
<div class="a" style="left:421px;top:241px;width:58px;height:58px;background:#f2b592"></div>
<div class="a" style="left:479px;top:240px;width:2px;height:1px;background:#000"></div>
<div class="a" style="left:421px;top:299px;width:1px;height:1px;background:#000"></div>
<div class="a" style="left:560px;top:182px;width:59px;height:59px;background:#026b63"></div>
<div class="a" style="left:619px;top:182px;width:59px;height:59px;background:#f2b592"></div>
<div class="a" style="left:560px;top:241px;width:59px;height:58px;background:#6a5040"></div>
<div class="a" style="left:619px;top:241px;width:59px;height:58px;background:#fecece"></div>
<div class="a" style="left:678px;top:240px;width:2px;height:1px;background:#000"></div>
<div class="a" style="left:619px;top:299px;width:1px;height:1px;background:#000"></div>
<div class="a" style="left:362px;top:369px;width:59px;height:58px;background:#026b63"></div>
<div class="a" style="left:421px;top:369px;width:58px;height:58px;background:#c4525a"></div>
<div class="a" style="left:362px;top:427px;width:59px;height:59px;background:#a0b2a2"></div>
<div class="a" style="left:421px;top:427px;width:58px;height:59px;background:#026b63"></div>
<div class="a" style="left:479px;top:426px;width:2px;height:1px;background:#000"></div>
<div class="a" style="left:421px;top:486px;width:1px;height:1px;background:#000"></div>
<div class="a" style="left:560px;top:369px;width:59px;height:58px;background:#f2b592"></div>
<div class="a" style="left:619px;top:369px;width:59px;height:58px;background:#80bcfc"></div>
<div class="a" style="left:560px;top:427px;width:59px;height:59px;background:#80bcfc"></div>
<div class="a" style="left:619px;top:427px;width:59px;height:59px;background:#c4525a"></div>
<div class="a" style="left:678px;top:426px;width:2px;height:1px;background:#000"></div>
<div class="a" style="left:619px;top:486px;width:1px;height:1px;background:#000"></div>
</body></html>
